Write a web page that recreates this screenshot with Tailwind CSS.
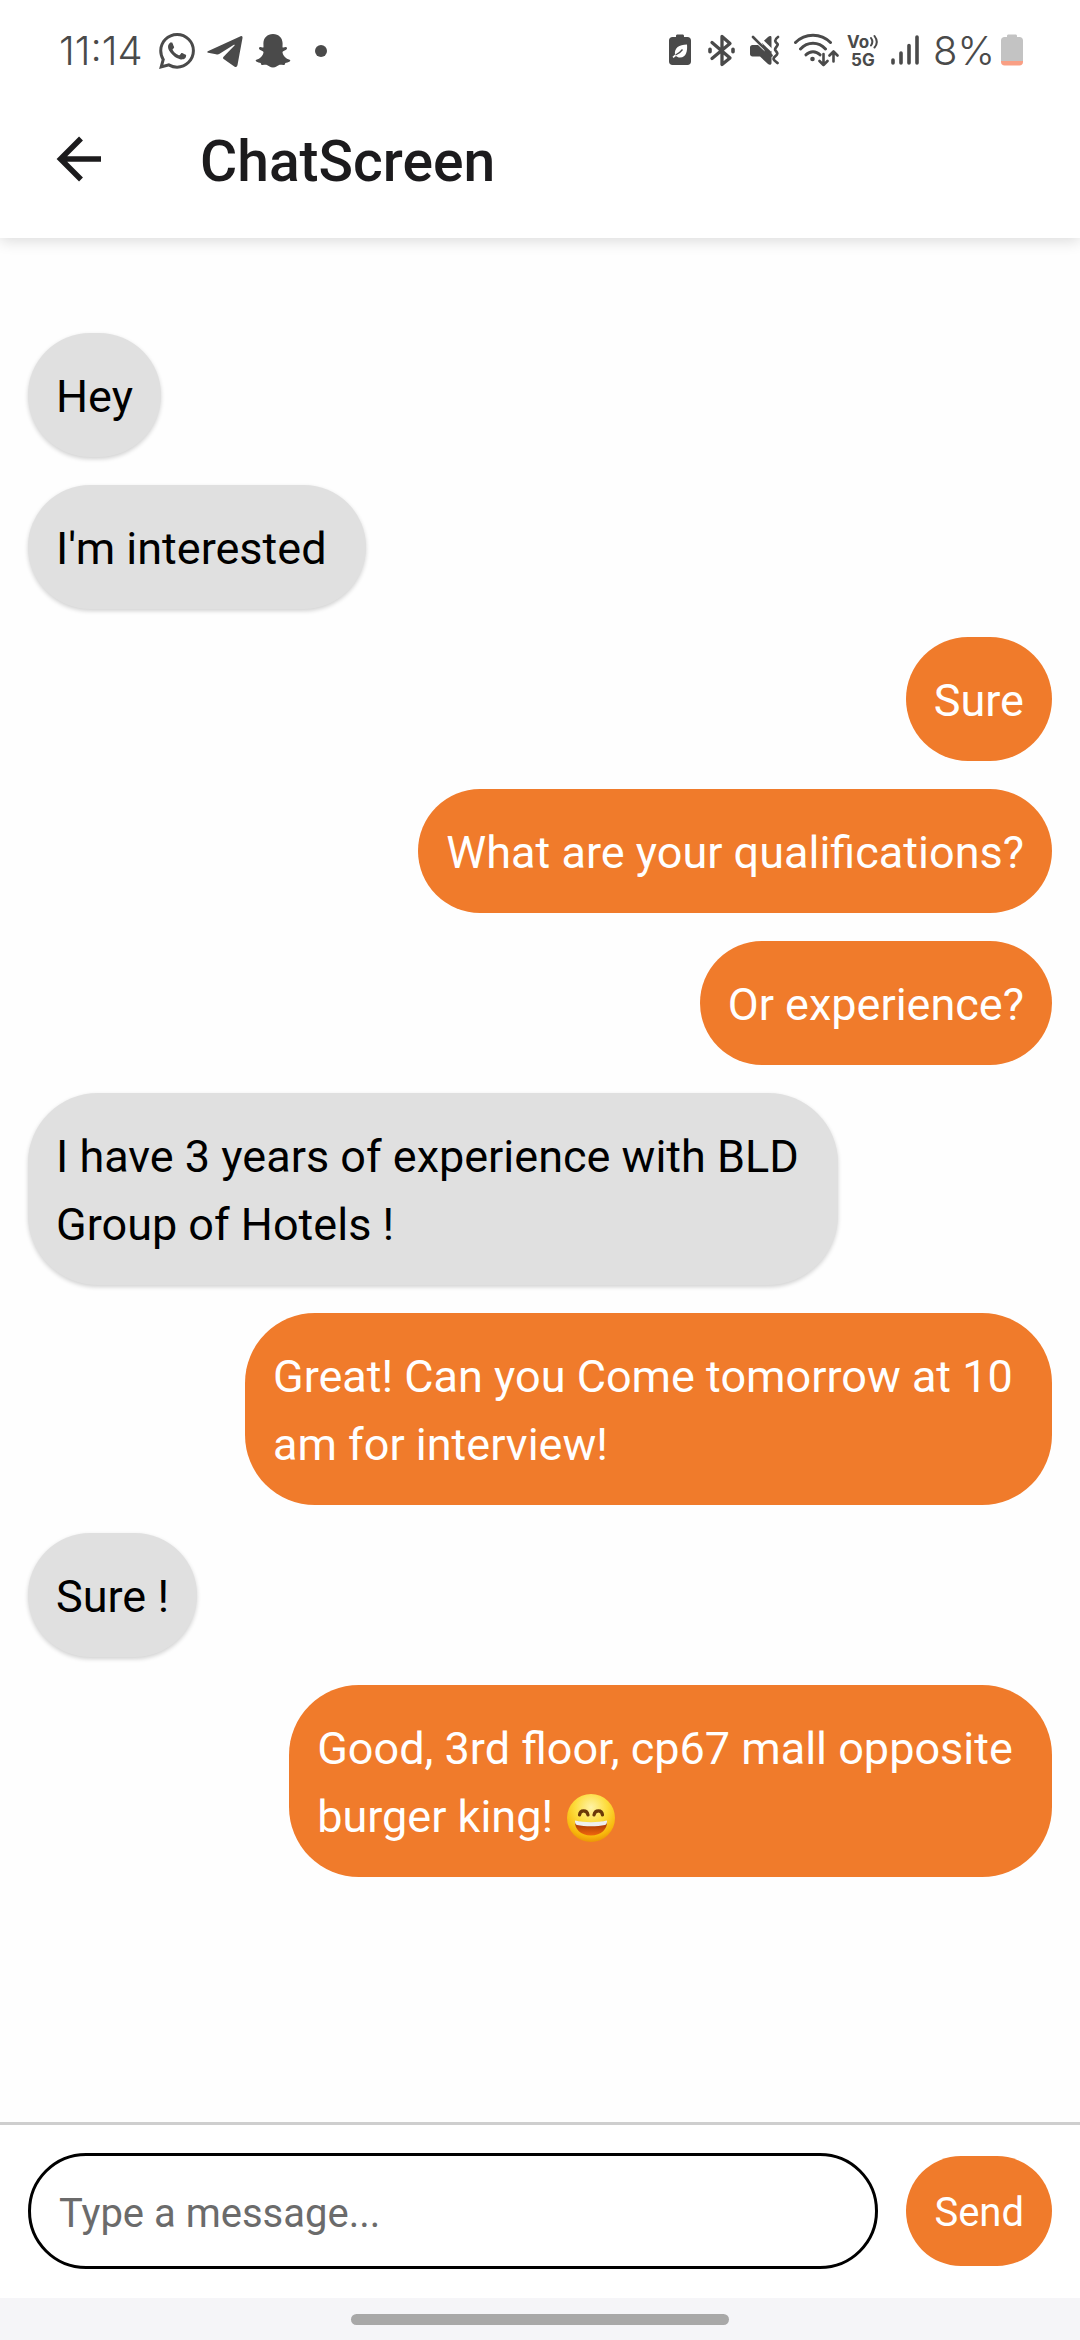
<!DOCTYPE html>
<html lang="en">
<head>
<meta charset="utf-8">
<meta name="viewport" content="width=device-width, initial-scale=1">
<title>ChatScreen</title>
<script src="https://cdn.jsdelivr.net/npm/@tailwindcss/browser@4"></script>
</head>
<body class="flex min-h-screen flex-col bg-[#fefefe] font-[Roboto,sans-serif] text-[45px] leading-[68px] text-black">

<header class="bg-white shadow-[0_3px_14px_rgba(0,0,0,0.14)]">
  <!-- Status bar -->
  <div class="flex items-center justify-between pt-[22px] pr-[57px] pl-[59px] font-[Inter,sans-serif] text-[40px] leading-[58px] font-light text-[#4a4a4a]">
    <div class="flex items-center gap-3">
      <span class="mr-1">11:14</span>
      <svg class="h-9 w-9" viewBox="0 0 24 24" fill="currentColor" aria-label="WhatsApp"><path d="M17.472 14.382c-.297-.149-1.758-.867-2.03-.967-.273-.099-.471-.148-.67.15-.197.297-.767.966-.94 1.164-.173.199-.347.223-.644.075-.297-.15-1.255-.463-2.39-1.475-.883-.788-1.48-1.761-1.653-2.059-.173-.297-.018-.458.13-.606.134-.133.298-.347.446-.52.149-.174.198-.298.298-.497.099-.198.05-.371-.025-.52-.075-.149-.669-1.612-.916-2.207-.242-.579-.487-.5-.669-.51-.173-.008-.371-.01-.57-.01-.198 0-.52.074-.792.372-.272.297-1.04 1.016-1.04 2.479 0 1.462 1.065 2.875 1.213 3.074.149.198 2.096 3.2 5.077 4.487.709.306 1.262.489 1.694.625.712.227 1.36.195 1.871.118.571-.085 1.758-.719 2.006-1.413.248-.694.248-1.289.173-1.413-.074-.124-.272-.198-.57-.347m-5.421 7.403h-.004a9.87 9.87 0 01-5.031-1.378l-.361-.214-3.741.982.998-3.648-.235-.374a9.86 9.86 0 01-1.51-5.26c.001-5.45 4.436-9.884 9.888-9.884 2.64 0 5.122 1.03 6.988 2.898a9.825 9.825 0 012.893 6.994c-.003 5.45-4.437 9.884-9.885 9.884m8.413-18.297A11.815 11.815 0 0012.05 0C5.495 0 .16 5.335.157 11.892c0 2.096.547 4.142 1.588 5.945L.057 24l6.305-1.654a11.882 11.882 0 005.683 1.448h.005c6.554 0 11.89-5.335 11.893-11.893a11.821 11.821 0 00-3.48-8.413z"/></svg>
      <svg class="h-9 w-9" viewBox="0 0 36 36" fill="currentColor" aria-label="Telegram"><path d="M.8 18.2 33.6 3.2c1.300-.5 2.200.2 1.900 1.900l-5 27c-.4 2-1.600 2.400-3.200 1.400L17 26.300c-1.200-.9-1.300-1.700-.2-2.800L27.500 12.600c.7-.8-.1-1.200-1-.6L12.600 20.700c-1.200.8-2.200.9-3.600.5L1.200 19.700c-1.200-.4-1.200-1-.4-1.500z"/></svg>
      <svg class="h-9 w-9" viewBox="0 0 36 36" fill="currentColor" aria-label="Snapchat"><path d="M18 1c5.800 0 9.500 4 9.600 9.300l-.1 4c1.500.7 3-.9 4.200.2.900 1-.1 2-1.500 2.800-1.500.8-2.800 1.100-2.700 2.400.6 3.400 3.400 5.800 7.100 7 .9.300.9 1.300.1 1.800-1.400.9-3 1.100-4.400 1.400-.4.900-.3 1.900-1.200 2.100-1.500.3-3.300-.5-5 0-2 .7-3.200 2.500-6.100 2.500s-4.100-1.800-6.100-2.500c-1.700-.5-3.500.3-5 0-.9-.2-.8-1.200-1.200-2.100-1.400-.3-3-.5-4.400-1.400-.8-.5-.8-1.500.1-1.800 3.700-1.200 6.500-3.600 7.100-7 .1-1.300-1.200-1.600-2.700-2.400-1.400-.8-2.400-1.800-1.500-2.800 1.200-1.100 2.700.5 4.200-.2l-.1-4C8.500 5 12.200 1 18 1z"/></svg>
      <span class="ml-3 h-3 w-3 rounded-full bg-current"></span>
    </div>
    <div class="flex items-center">
      <svg class="h-9 w-[22px]" viewBox="0 0 22 36" aria-label="Power saving"><path fill="currentColor" d="M7 4V3c0-1 .6-1.500 1.500-1.500h5c.9 0 1.500.5 1.500 1.500v1h3.500C20.600 4 22 5.400 22 7.500v21c0 2.100-1.400 3.500-3.500 3.500h-15C1.400 32 0 30.600 0 28.500v-21C0 5.400 1.400 4 3.500 4z"/><path fill="#fff" d="M18 11.500c.5 6-.5 13-7 13-1.800 0-3.200-.6-4-1.500l-2.500 2-1-1.200L6 21.500c-.8-6.500 4-10 12-10z"/><path d="M6.500 22c3-1.200 5-2.800 7-5.500" fill="none" stroke="currentColor" stroke-width="1.300"/></svg>
      <svg class="ml-[17px] h-9 w-[27px]" viewBox="0 0 27 36" fill="none" stroke="currentColor" stroke-width="3.300" stroke-linejoin="round" stroke-linecap="round" aria-label="Bluetooth"><path d="M4 9.500 22 25l-8 6.500v-28l8 7L4 25.500"/><path d="M2 16.200v2.600M25 16.200v2.600" stroke-width="3.600"/></svg>
      <svg class="ml-[15px] h-9 w-[30px]" viewBox="0 0 30 36" aria-label="Vibrate"><path fill="currentColor" d="M21.500 4.500v21L15 19 12 9.500l6-5.500c1.500-1.300 3.500-1.300 3.500.5zM2.500 12H8l13.500 13v5c0 2-2 2.400-3.500 1l-8-7.500H2.500C1 23.500 0 22.500 0 21v-6.500C0 13 1 12 2.500 12z"/><path d="m5 1 17 16.500" stroke="#fff" stroke-width="3"/><path d="m3 4 18.500 18.500" stroke="currentColor" stroke-width="2.600" stroke-linecap="round"/><path d="M28 4c-5 3.500-2 5.500-.5 7s-4 4-2 6.500 3 3-.5 6 .5 4.500 2.500 6.500" fill="none" stroke="currentColor" stroke-width="2.700" stroke-linecap="round"/></svg>
      <svg class="ml-[14px] h-9 w-[45px]" viewBox="0 0 45 36" fill="none" stroke="currentColor" stroke-width="3" stroke-linecap="round" stroke-linejoin="round" aria-label="Wi-Fi"><path d="M1.500 9.500c9.500-9.800 25.500-9.800 35 0M6.500 16c7-7.600 18-7.600 25 0M12 21.800c4-4.200 10-4.200 14 0"/><circle cx="18.500" cy="26" r="2.300" fill="currentColor" stroke="none"/><path d="M29.500 21v11m-4-4 4 4 4-4M39.500 28.500V18.500m-4 4 4-4 4 4" stroke-width="2.600"/></svg>
      <div class="ml-2 flex w-8 flex-col text-[17px] leading-[18px] font-bold" aria-label="VoLTE 5G">
        <span class="flex items-center">Vo<svg class="h-4 w-[9px] shrink-0" viewBox="0 0 9 16" fill="none" stroke="currentColor" stroke-width="2" stroke-linecap="round"><path d="M2 4c1.800 2.500 1.800 5 0 7.500M5.500 2c3 4 3 8 0 11.500"/></svg></span>
        <span class="pl-1">5G</span>
      </div>
      <svg class="ml-3 h-9 w-7" viewBox="0 0 28 36" stroke="currentColor" stroke-width="3.600" stroke-linecap="round" aria-label="Signal"><path d="M2 27v3M10 20v10M18 12.500V30M26 4v26"/></svg>
      <span class="ml-[14px]">8%</span>
      <svg class="ml-[6px] h-9 w-[22px]" viewBox="0 0 22 36" aria-label="Battery"><path fill="#c3c3c3" d="M6 4V3c0-1 .6-1.500 1.500-1.500h7c.9 0 1.500.5 1.500 1.500v1h2.500C20.600 4 22 5.400 22 7.500V28H0V7.500C0 5.400 1.400 4 3.500 4z"/><path fill="#f99f84" d="M0 28h22v1c0 2-1.400 3.500-3.500 3.500h-15C1.400 32.500 0 31 0 29z"/></svg>
    </div>
  </div>

  <div class="flex h-[158px] items-center gap-[94px] px-[52px] text-[#1c1b1d]">
    <button type="button" aria-label="Back" class="flex w-[54px] items-center justify-center">
      <svg class="h-[46px] w-[46px]" viewBox="0 0 46 46" fill="none" stroke="currentColor" stroke-width="5.500"><path d="M25 2.500 4.500 23 25 43.500M4.500 23H45"/></svg>
    </button>
    <h1 class="pt-[6px] text-[57px] leading-[64px] font-medium">ChatScreen</h1>
  </div>
</header>

<main class="flex flex-1 flex-col gap-7 px-7 pt-[95px] pb-7">
  <p class="w-fit max-w-4/5 rounded-[70px] bg-[#e0e0e0] px-7 pt-[30px] pb-[26px] shadow-[0_2px_4px_rgba(0,0,0,0.18)]">Hey</p>
  <p class="w-fit max-w-4/5 rounded-[70px] bg-[#e0e0e0] px-7 pt-[30px] pb-[26px] shadow-[0_2px_4px_rgba(0,0,0,0.18)]">I'm interested&nbsp;</p>
  <p class="w-fit max-w-4/5 self-end rounded-[70px] bg-[#f07b2b] px-7 pt-[30px] pb-[26px] text-white">Sure</p>
  <p class="w-fit max-w-4/5 self-end rounded-[70px] bg-[#f07b2b] px-7 pt-[30px] pb-[26px] text-white">What are your qualifications?</p>
  <p class="w-fit max-w-4/5 self-end rounded-[70px] bg-[#f07b2b] px-7 pt-[30px] pb-[26px] text-white">Or experience?</p>
  <p class="w-fit max-w-4/5 rounded-[70px] bg-[#e0e0e0] px-7 pt-[30px] pb-[26px] shadow-[0_2px_4px_rgba(0,0,0,0.18)]">I have 3 years of experience with BLD&nbsp;<br>Group of Hotels !</p>
  <p class="w-fit max-w-4/5 self-end rounded-[70px] bg-[#f07b2b] px-7 pt-[30px] pb-[26px] text-white">Great! Can you Come tomorrow at 10&nbsp;<br>am for interview!</p>
  <p class="w-fit max-w-4/5 rounded-[70px] bg-[#e0e0e0] px-7 pt-[30px] pb-[26px] shadow-[0_2px_4px_rgba(0,0,0,0.18)]">Sure !</p>
  <p class="w-fit max-w-4/5 self-end rounded-[70px] bg-[#f07b2b] px-7 pt-[30px] pb-[26px] text-white">Good, 3rd floor, cp67 mall opposite&nbsp;<br>burger king!
    <svg class="inline-block h-12 w-[54px] align-[-10px]" viewBox="-3 0 54 48" role="img" aria-label="Grinning face with smiling eyes">
      <defs>
        <radialGradient id="face" cx=".5" cy=".28" r=".75"><stop offset="0" stop-color="#fff3a6"/><stop offset=".45" stop-color="#fddc3c"/><stop offset=".8" stop-color="#f8b80c"/><stop offset="1" stop-color="#e88e06"/></radialGradient>
        <linearGradient id="mouth" x1="0" y1="0" x2="0" y2="1"><stop offset="0" stop-color="#9a3007"/><stop offset="1" stop-color="#f0670c"/></linearGradient>
      </defs>
      <circle cx="24" cy="24" r="24" fill="url(#face)"/>
      <path d="M12.500 21c.5-5.500 7.500-5.500 8.500 0M27 21c1-5.500 8-5.500 8.500 0" fill="none" stroke="#6b3808" stroke-width="3.200" stroke-linecap="round"/>
      <path d="M8 27c10 2.500 22 2.500 32 0 .5 8-5.500 14.500-16 14.500S7.500 35 8 27z" fill="url(#mouth)"/>
      <path d="M8 26.500c10 2.200 22 2.200 32 0 .2 2.500-.5 4-2 4.500-8 1.800-20 1.800-28 0-1.500-.5-2.200-2-2-4.500z" fill="#eef0ee"/>
    </svg></p>
</main>

<footer>
  <form class="flex items-center gap-7 border-t-[3px] border-[#cecece] bg-white px-7 pt-7 pb-[29px] text-[40px] leading-[54px]">
    <input type="text" aria-label="Message" placeholder="Type a message..." class="h-[116px] min-w-0 flex-1 rounded-full border-[3px] border-black bg-transparent px-7 pt-1 placeholder:text-[#6b6b6b]">
    <button type="button" class="rounded-[56px] bg-[#f07b2b] px-7 pt-[30px] pb-[26px] text-white">Send</button>
  </form>
  <div class="flex h-[42px] items-center justify-center bg-[#f5f5f8]">
    <span class="h-[11px] w-[35%] rounded-full bg-[#a8a8a8]"></span>
  </div>
</footer>
</body>
</html>
